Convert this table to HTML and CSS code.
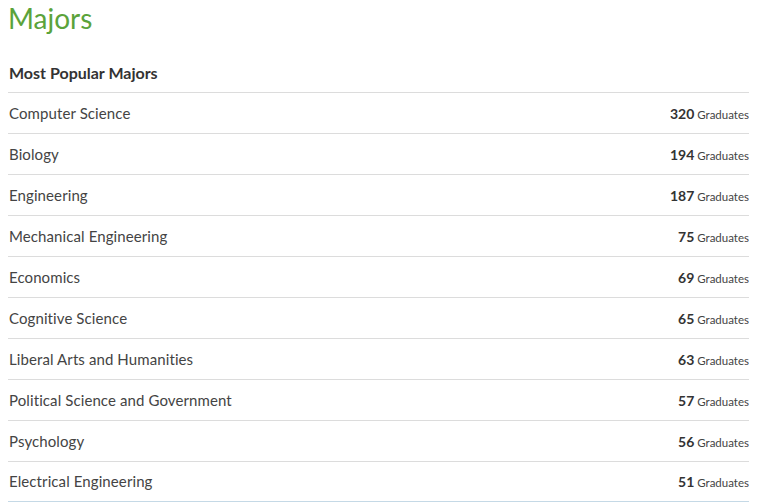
FILE: index.html
```html
<!DOCTYPE html>
<html>
<head>
<meta charset="utf-8">
<link rel="stylesheet" href="styles.css">
</head>
<body>
<div class="page">
  <h1 class="title">Majors</h1>
  <h2 class="subtitle">Most Popular Majors</h2>
  <ul class="list">
    <li class="row"><span class="name">Computer Science</span><span class="count"><b>320</b> Graduates</span></li>
    <li class="row"><span class="name">Biology</span><span class="count"><b>194</b> Graduates</span></li>
    <li class="row"><span class="name">Engineering</span><span class="count"><b>187</b> Graduates</span></li>
    <li class="row"><span class="name">Mechanical Engineering</span><span class="count"><b>75</b> Graduates</span></li>
    <li class="row"><span class="name">Economics</span><span class="count"><b>69</b> Graduates</span></li>
    <li class="row"><span class="name">Cognitive Science</span><span class="count"><b>65</b> Graduates</span></li>
    <li class="row"><span class="name">Liberal Arts and Humanities</span><span class="count"><b>63</b> Graduates</span></li>
    <li class="row"><span class="name">Political Science and Government</span><span class="count"><b>57</b> Graduates</span></li>
    <li class="row"><span class="name">Psychology</span><span class="count"><b>56</b> Graduates</span></li>
    <li class="row"><span class="name">Electrical Engineering</span><span class="count"><b>51</b> Graduates</span></li>
  </ul>
</div>
</body>
</html>
```

FILE: styles.css
```css
* { box-sizing: border-box; }
html, body { margin: 0; padding: 0; background: #fff; }
body {
  font-family: "Lato", "Open Sans", sans-serif;
  color: #444;
  overflow: hidden;
}
.page {
  width: 741px;
  margin-left: 8px;
}
.title {
  margin: 0;
  padding-top: 1px;
  font-size: 28px;
  font-weight: 400;
  line-height: 34px;
  color: #5ba33b;
  height: 59px;
}
.subtitle {
  margin: 0;
  padding-left: 1px;
  font-size: 16px;
  font-weight: 700;
  line-height: 28px;
  height: 34px;
  color: #333;
  border-bottom: 1px solid #dcdcdc;
}
.list {
  list-style: none;
  margin: 0;
  padding: 0;
}
.row {
  display: flex;
  justify-content: space-between;
  align-items: center;
  height: 41px;
  padding-left: 1px;
  border-bottom: 1px solid #dcdcdc;
}
.row:last-child {
  height: 40px;
  padding-bottom: 1px;
  border-bottom-color: #c5d9e6;
}
.name {
  font-size: 15px;
  letter-spacing: 0.1px;
  color: #444;
}
.count {
  font-size: 11.5px;
  color: #444;
}
.count b {
  font-size: 14px;
  font-weight: 700;
  color: #333;
}
```
